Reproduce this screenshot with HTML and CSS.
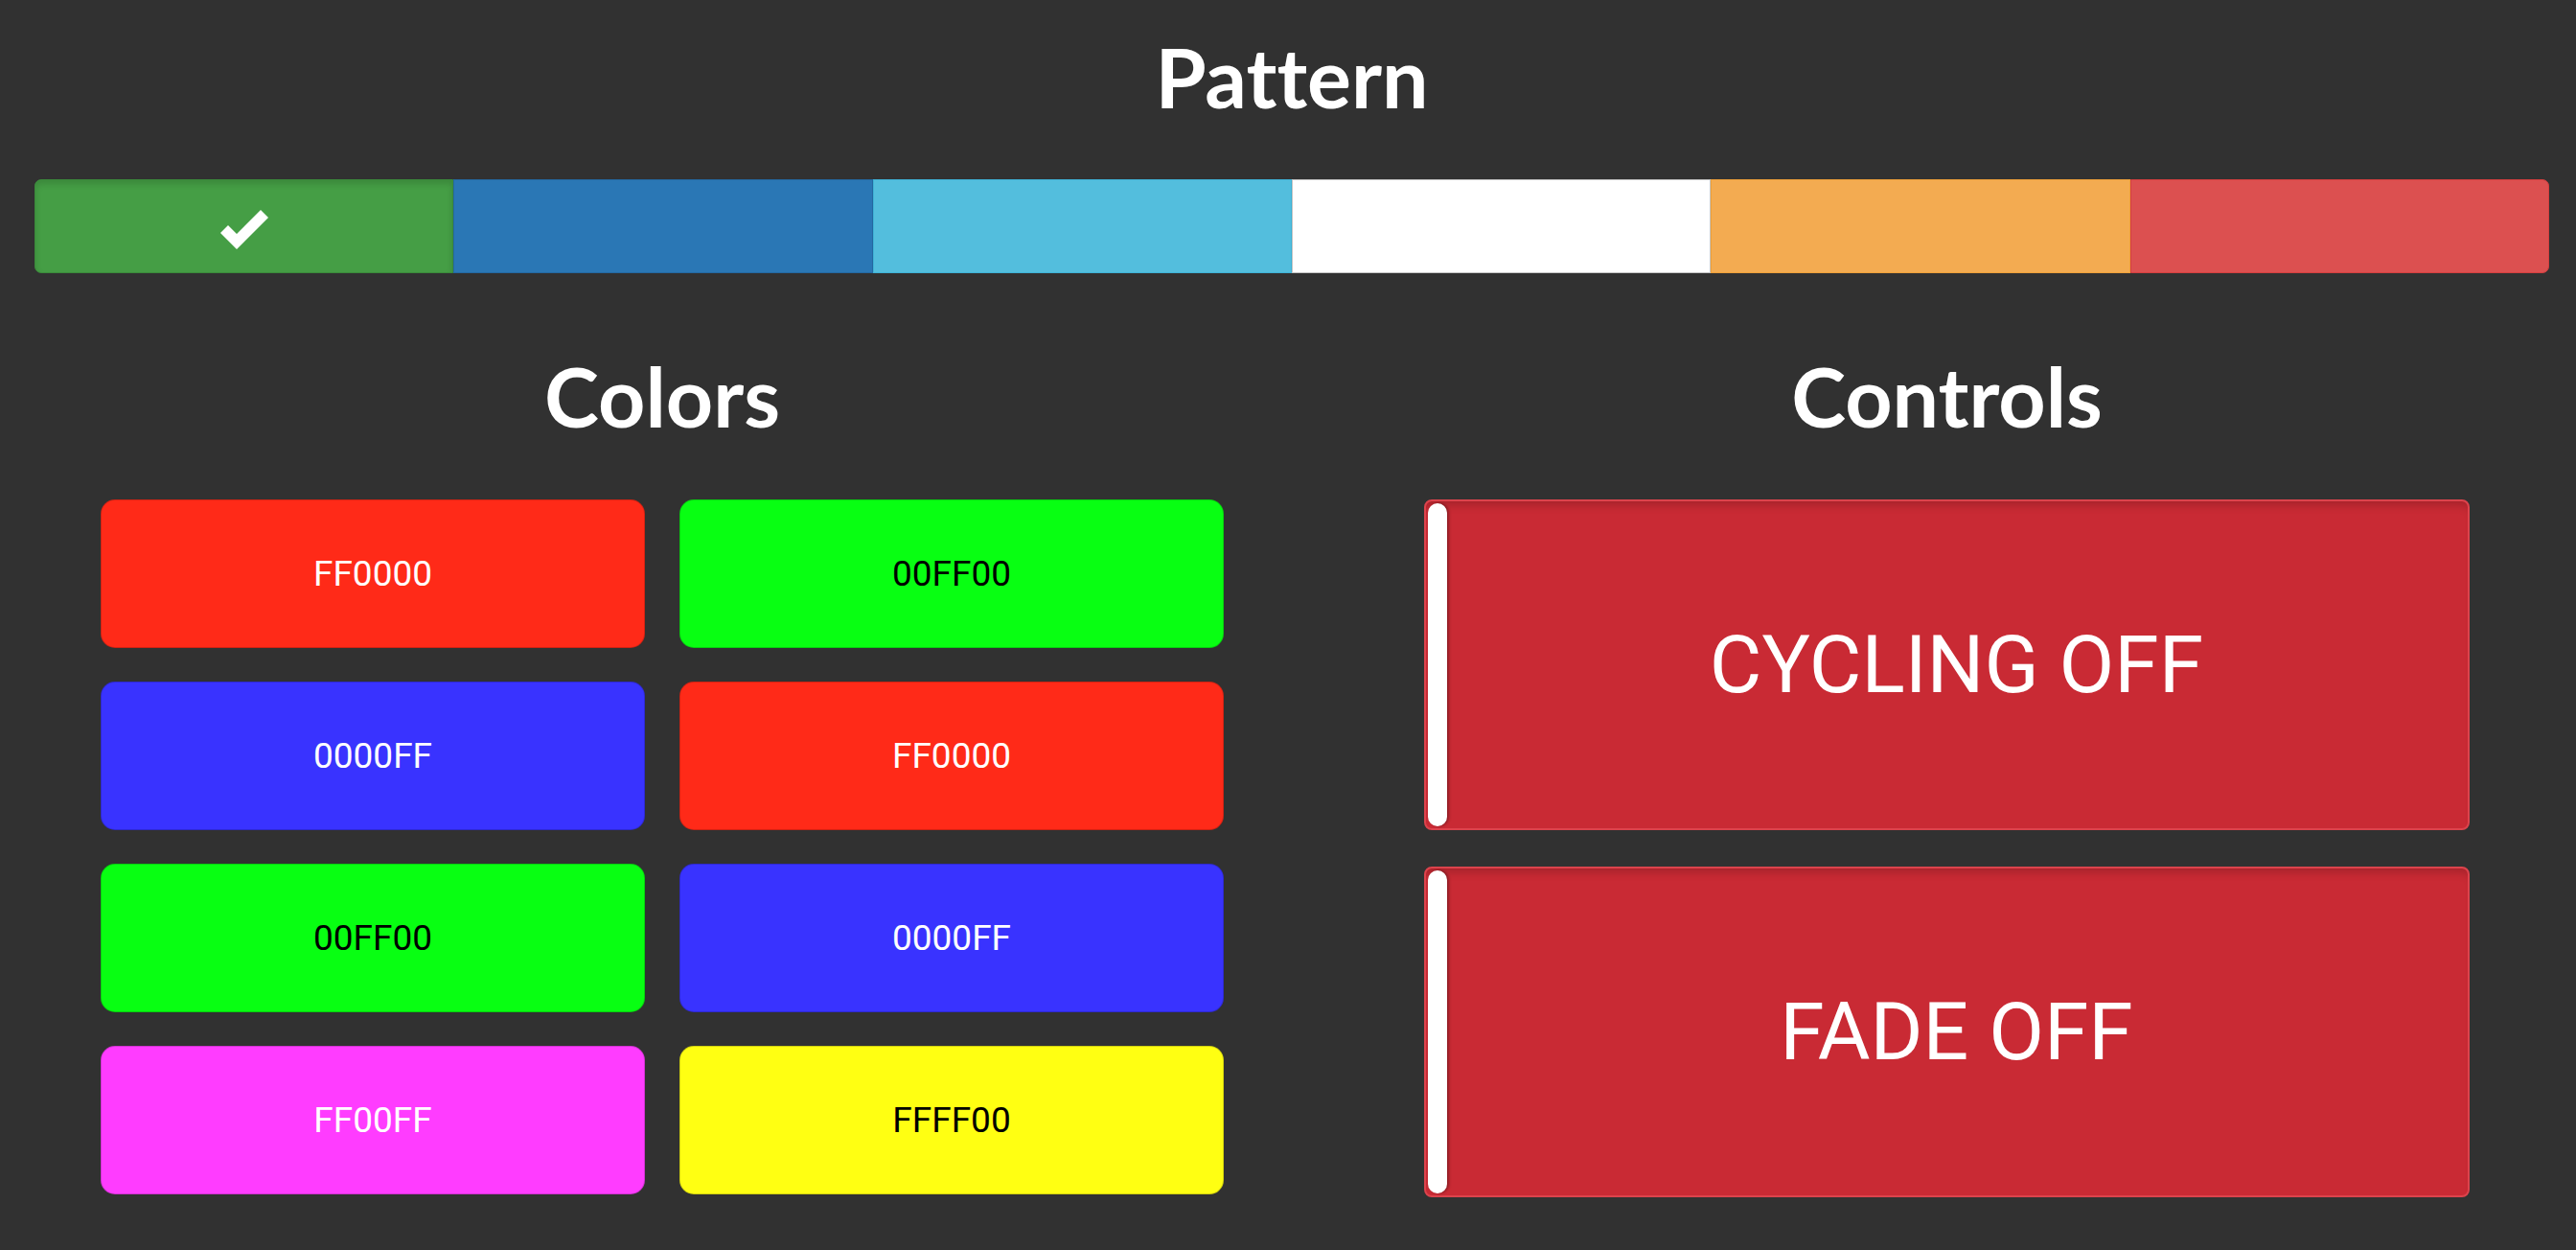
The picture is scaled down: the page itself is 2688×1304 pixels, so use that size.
FILE: index.html
```html
<!DOCTYPE html>
<html lang="en">
<head>
    <meta charset="UTF-8">
    <meta name="viewport" content="width=device-width, initial-scale=1.0">
    <title>LED Controller</title>
    <link rel="stylesheet" href="styles.css">
</head>
<body>
    <header class="pattern">
        <h1>Pattern</h1>
        <div class="pattern-bar">
            <button class="seg seg-green active">
                <svg class="check" viewBox="0 0 50 42" width="50" height="42">
                    <polygon points="0,25 8,17 17,26 42,1 50,9 17,42" fill="#fff"/>
                </svg>
            </button>
            <button class="seg seg-blue"></button>
            <button class="seg seg-info"></button>
            <button class="seg seg-white"></button>
            <button class="seg seg-orange"></button>
            <button class="seg seg-red"></button>
        </div>
    </header>
    <main class="panels">
        <section class="colors">
            <h2>Colors</h2>
            <div class="swatches">
                <button class="swatch red">FF0000</button>
                <button class="swatch green">00FF00</button>
                <button class="swatch blue">0000FF</button>
                <button class="swatch red">FF0000</button>
                <button class="swatch green">00FF00</button>
                <button class="swatch blue">0000FF</button>
                <button class="swatch magenta">FF00FF</button>
                <button class="swatch yellow">FFFF00</button>
            </div>
        </section>
        <section class="controls">
            <h2>Controls</h2>
            <div class="toggles">
                <button class="toggle">
                    <span class="handle"></span>
                    <span class="toggle-label">CYCLING OFF</span>
                </button>
                <button class="toggle">
                    <span class="handle"></span>
                    <span class="toggle-label">FADE OFF</span>
                </button>
            </div>
        </section>
    </main>
</body>
</html>
```

FILE: styles.css
```css
body {
    margin: 0;
    background-color: #313131;
    font-family: 'Roboto', 'Liberation Sans', sans-serif;
    color: white;
}

h1, h2 {
    font-family: 'Lato', 'Open Sans', sans-serif;
    font-weight: 700;
    font-size: 86px;
    line-height: 1;
    text-align: center;
    font-variant-ligatures: none;
    margin: 0;
}

.pattern {
    padding: 37px 28px 0 36px;
}

.pattern h1 {
    margin-bottom: 64px;
}

.pattern-bar {
    display: flex;
    height: 98px;
}

.seg {
    flex: 1;
    margin: 0;
    border: 1px solid;
    border-radius: 0;
    padding: 0;
    display: flex;
    align-items: center;
    justify-content: center;
    cursor: pointer;
}

.seg:first-child {
    border-radius: 7px 0 0 7px;
}

.seg:last-child {
    border-radius: 0 7px 7px 0;
}

.seg.active {
    box-shadow: inset 0 4px 6px rgba(0, 0, 0, 0.14);
}

.seg-green {
    background-color: #459e45;
    border-color: #3b8a3b;
}

.seg-blue {
    background-color: #2a77b5;
    border-color: #2468a0;
}

.seg-info {
    background-color: #53bedd;
    border-color: #3fb2d6;
}

.seg-white {
    background-color: #ffffff;
    border-color: #c4c4c4;
}

.seg-orange {
    background-color: #f3ab51;
    border-color: #eea03a;
}

.seg-red {
    background-color: #dc5050;
    border-color: #d43f3f;
}

.check {
    display: block;
    margin-top: 6px;
}

.panels {
    display: grid;
    grid-template-columns: 1310px 1fr;
    padding: 0 28px 0 36px;
    margin-top: 85px;
}

.colors h2,
.controls h2 {
    margin-bottom: 65px;
}

.controls {
    padding-left: 57px;
}

.swatches {
    display: grid;
    grid-template-columns: 568px 568px;
    grid-auto-rows: 155px;
    gap: 35px 36px;
    justify-content: center;
}

.swatch {
    border: 1px solid rgba(0, 0, 0, 0.18);
    border-radius: 15px;
    font-family: 'Roboto', sans-serif;
    font-size: 37px;
    color: white;
    padding: 0;
    cursor: pointer;
}

.swatch.red {
    background-color: #ff2a18;
}

.swatch.green {
    background-color: #08ff12;
    color: black;
}

.swatch.blue {
    background-color: #3933ff;
}

.swatch.magenta {
    background-color: #ff3cff;
}

.swatch.yellow {
    background-color: #ffff12;
    color: black;
}

.toggles {
    display: flex;
    flex-direction: column;
    align-items: center;
    gap: 38px;
}

.toggle {
    width: 1091px;
    height: 345px;
    display: flex;
    align-items: stretch;
    padding: 2px;
    background-color: #c92a34;
    border: 2px solid #dc434c;
    border-radius: 8px;
    box-shadow: inset 0 10px 10px -6px rgba(0, 0, 0, 0.18);
    color: white;
    cursor: pointer;
}

.handle {
    width: 20px;
    background-color: white;
    border-radius: 10px;
    box-shadow: 2px 0 3px rgba(0, 0, 0, 0.3);
}

.toggle-label {
    flex: 1;
    display: flex;
    align-items: center;
    justify-content: center;
    font-family: 'Roboto', sans-serif;
    font-size: 84px;
}
```
